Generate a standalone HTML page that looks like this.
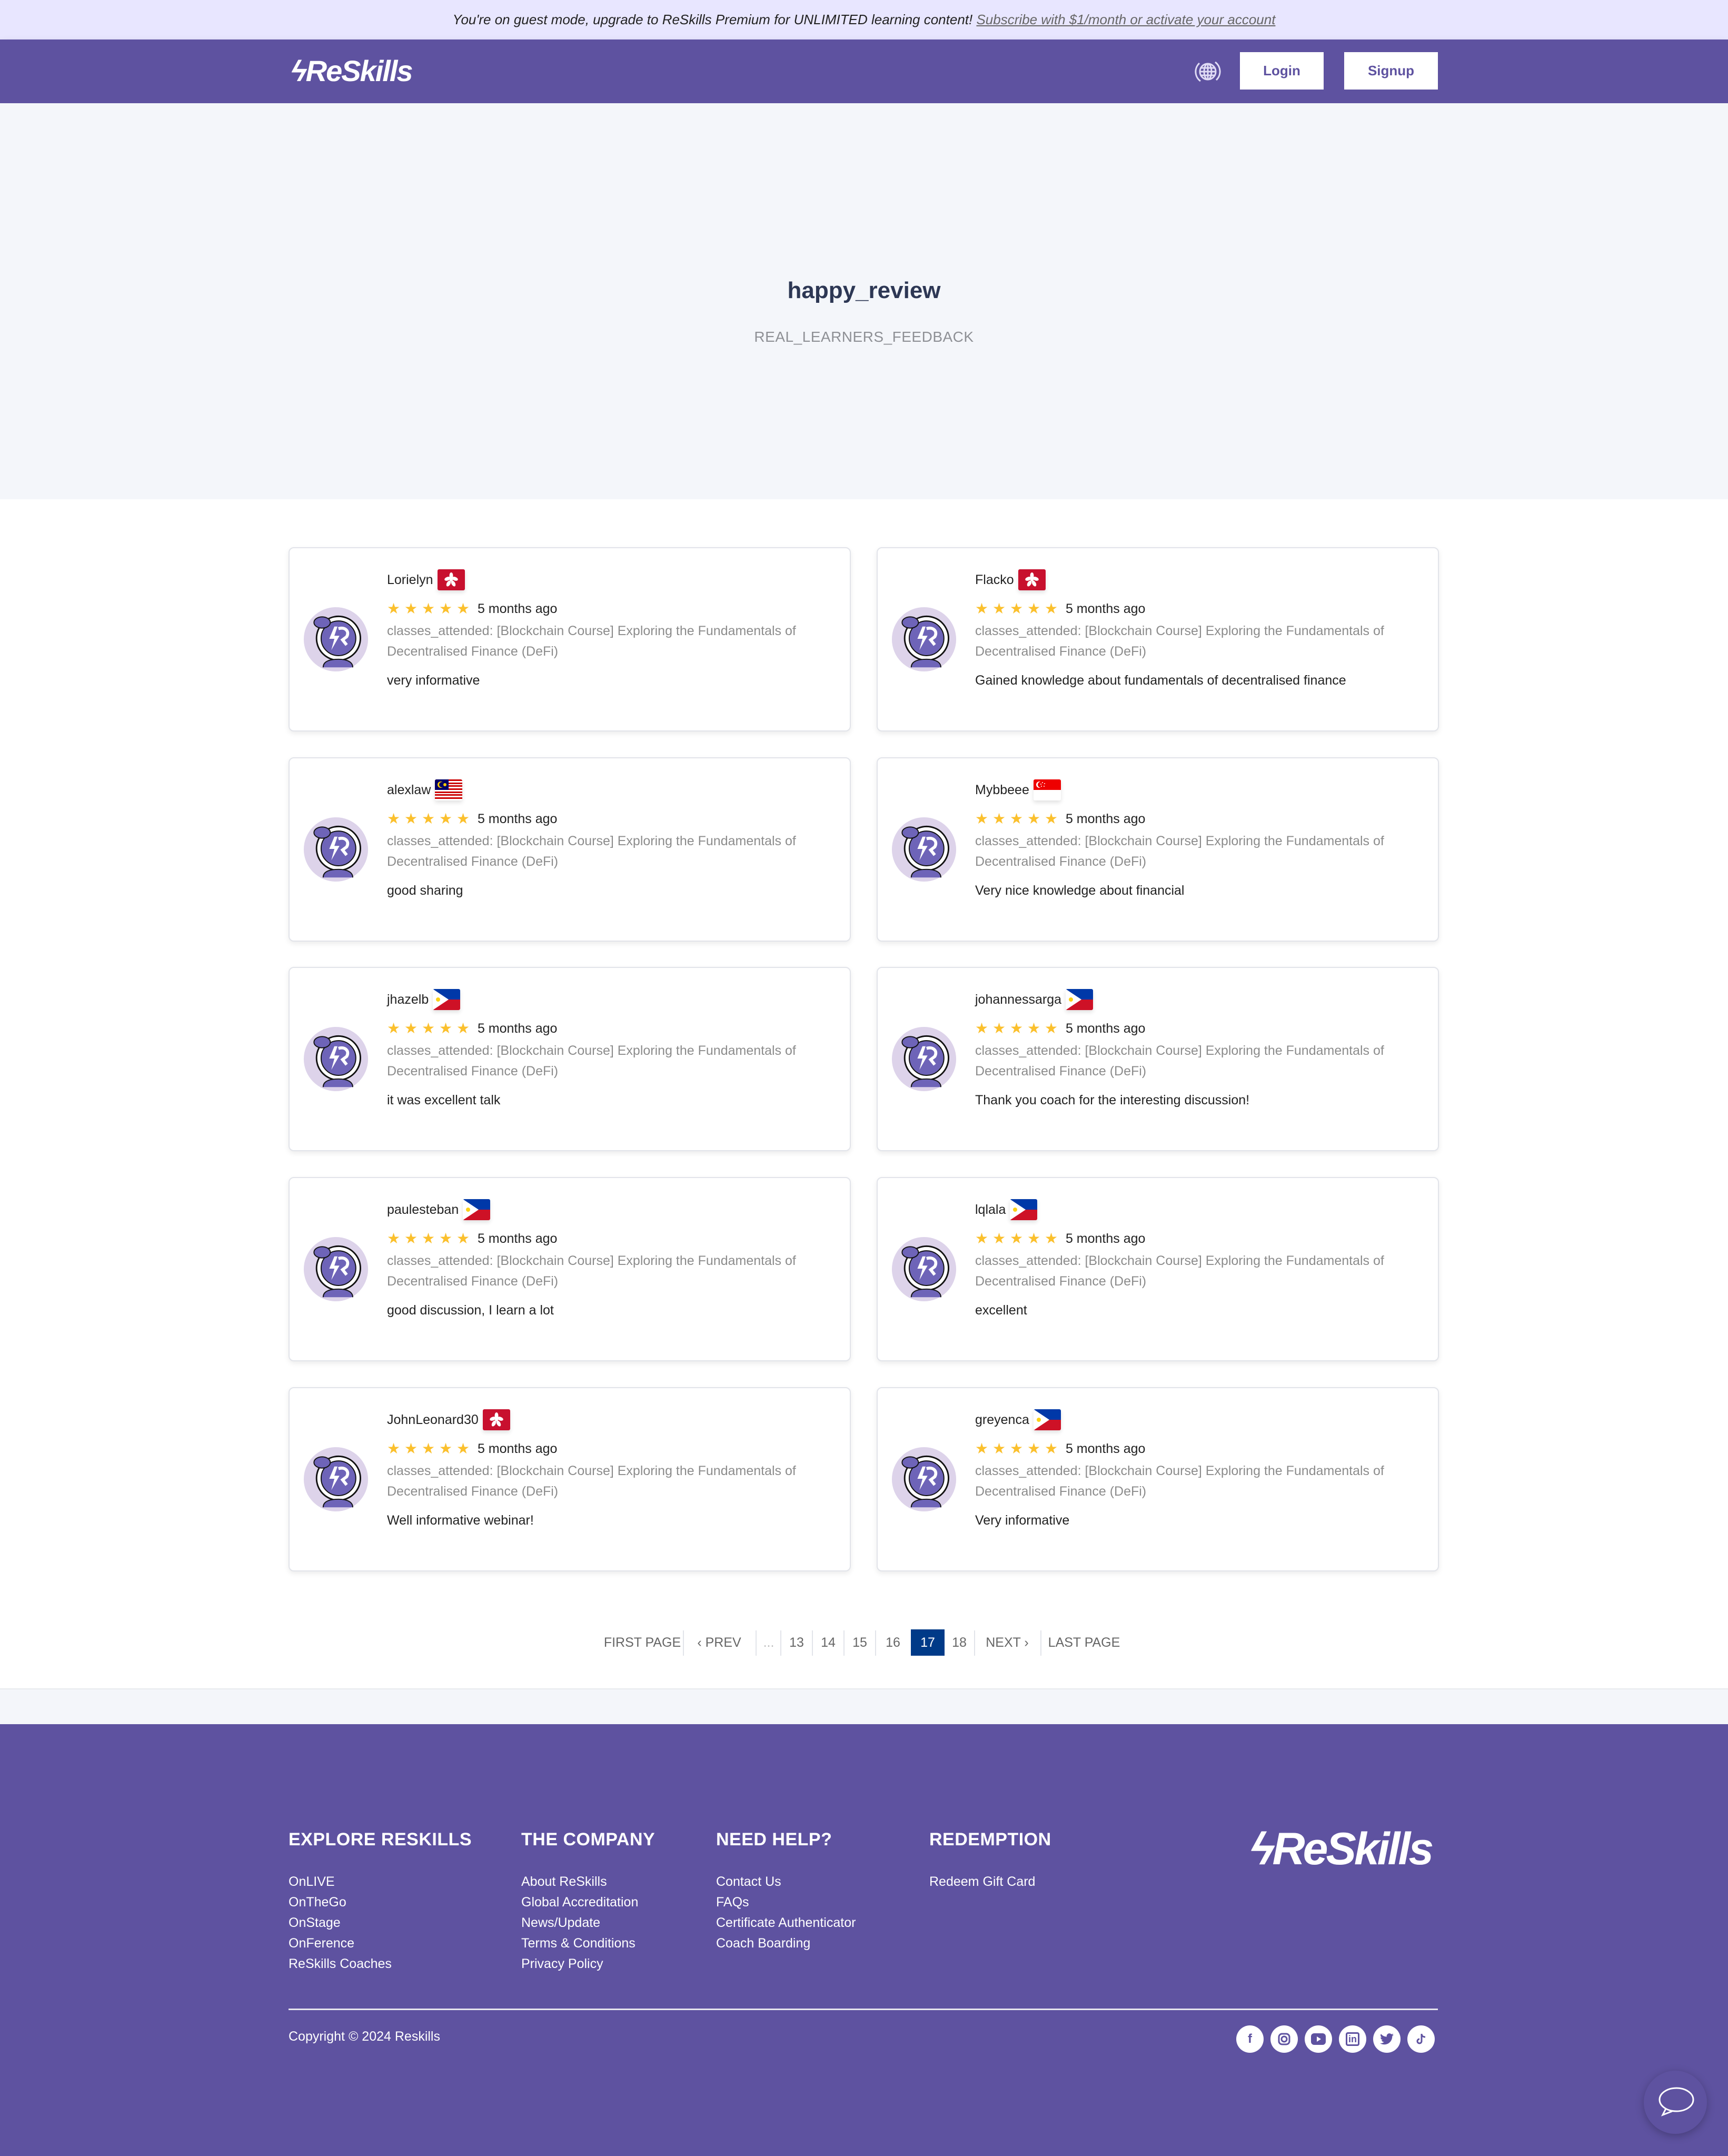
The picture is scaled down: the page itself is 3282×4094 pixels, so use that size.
<!DOCTYPE html>
<html><head><meta charset="utf-8">
<style>
*{margin:0;padding:0;box-sizing:border-box}
body{width:3282px;height:4094px;position:relative;font-family:"Liberation Sans","DejaVu Sans",sans-serif;background:#fff;overflow:hidden}
.a{position:absolute;white-space:nowrap}
.card{position:absolute;width:1068px;height:350px;border:2px solid #e2e4ea;border-radius:10px;background:#fff;box-shadow:0 4px 10px rgba(0,0,0,.08)}
.card .nm{position:absolute;left:185px;top:40px;font-size:25px;color:#222;line-height:32px;display:flex;align-items:center}
.card .nm svg{margin-left:8px;border-radius:3px;box-shadow:0 4px 8px rgba(0,0,0,.12)}
.card .st{position:absolute;left:185px;top:98px;font-size:25px;color:#222;line-height:34px;display:flex;align-items:center}
.card .st span.s{color:#fbc02d;font-size:28px;width:33px;display:inline-block}
.card .cl{position:absolute;left:185px;top:138px;font-size:25px;color:#8c8c8c;line-height:39px;white-space:normal;width:840px}
.card .cm{position:absolute;left:185px;top:234px;font-size:25px;color:#222;line-height:34px}
.card .av{position:absolute;left:25px;top:110px}
.pg{position:absolute;top:3094px;height:50px;line-height:50px;font-size:25px;color:#666;text-align:center;white-space:nowrap}
.sep{position:absolute;top:3096px;width:2px;height:48px;background:#e2e4ea}
.fh{position:absolute;top:3474px;font-size:34px;color:#fff;font-weight:bold;letter-spacing:.5px}
.fl{position:absolute;font-size:25px;color:#fff;line-height:39px}
.soc{position:absolute;top:3846px;width:52px;height:52px;border-radius:50%;background:#fff;display:flex;align-items:center;justify-content:center;color:#5e52a0;font-size:24px;font-weight:bold}
</style></head><body>
<div class="a" style="left:0;top:0;width:3282px;height:75px;background:#e8e6ff"></div>
<div class="a" style="left:0;top:20px;width:3282px;text-align:center;font-size:26px;font-style:italic;color:#222;line-height:34px">You're on guest mode, upgrade to ReSkills Premium for UNLIMITED learning content! <span style="color:#666;text-decoration:underline">Subscribe with $1/month or activate your account</span></div>
<div class="a" style="left:0;top:75px;width:3282px;height:121px;background:#5e52a0;box-shadow:0 6px 14px rgba(0,0,0,.15)"></div>
<div class="a" style="left:553px;top:100px;font-size:56px;font-weight:bold;font-style:italic;color:#fff;letter-spacing:-2px;line-height:70px">&#x03DF;ReSkills</div>
<svg class="a" style="left:2268px;top:110px" width="52" height="52" viewBox="0 0 52 52" fill="none" stroke="#e0dcf5" stroke-width="3"><circle cx="26" cy="26" r="15"/><ellipse cx="26" cy="26" rx="7" ry="15"/><line x1="11" y1="26" x2="41" y2="26"/><line x1="13" y1="19" x2="39" y2="19"/><line x1="13" y1="33" x2="39" y2="33"/><line x1="26" y1="11" x2="26" y2="41"/><path d="M40 8a22 22 0 0 1 2 34M12 44a22 22 0 0 1-2-34"/></svg>
<div class="a" style="left:2355px;top:99px;width:159px;height:71px;background:#fff;color:#5e52a0;font-size:26px;font-weight:bold;text-align:center;line-height:71px">Login</div>
<div class="a" style="left:2553px;top:99px;width:178px;height:71px;background:#fff;color:#5e52a0;font-size:26px;font-weight:bold;text-align:center;line-height:71px">Signup</div>
<div class="a" style="left:0;top:196px;width:3282px;height:752px;background:#f4f6fa"></div>
<div class="a" style="left:0;top:524px;width:3282px;text-align:center;font-size:44px;color:#2d3754;font-weight:bold;line-height:56px">happy_review</div>
<div class="a" style="left:0;top:620px;width:3282px;text-align:center;font-size:28px;color:#8e9095;line-height:40px;letter-spacing:.5px">REAL_LEARNERS_FEEDBACK</div>

<svg width="0" height="0" style="position:absolute"><defs>
<symbol id="av" viewBox="0 0 130 130"><circle cx="65" cy="65" r="63" fill="#ddd3ea"/><circle cx="70" cy="63" r="43" fill="#fff" stroke="#111" stroke-width="3"/><circle cx="70" cy="63" r="34" fill="#6e64b8" stroke="#111" stroke-width="2"/><path d="M62 40l-10 24h10l-6 22 16-28h-10l6-18z" fill="#fff"/><path d="M70 44c14-4 22 6 16 16l-8 6 8 10" stroke="#fff" stroke-width="6" fill="none"/><ellipse cx="38" cy="32" rx="16" ry="11" fill="#6e64b8" stroke="#111" stroke-width="2"/><path d="M40 120c0-12 12-16 30-16s28 6 28 16" fill="#6e64b8" stroke="#111" stroke-width="2"/></symbol>
<symbol id="hk" viewBox="0 0 52 40"><rect width="52" height="40" fill="#c8102e"/><g fill="#fff"><circle cx="26" cy="20" r="3"/><ellipse cx="26" cy="12" rx="3.5" ry="6"/><ellipse cx="33" cy="18" rx="6" ry="3.5" transform="rotate(20 33 18)"/><ellipse cx="30" cy="27" rx="3.5" ry="6" transform="rotate(-30 30 27)"/><ellipse cx="21" cy="27" rx="3.5" ry="6" transform="rotate(30 21 27)"/><ellipse cx="19" cy="18" rx="6" ry="3.5" transform="rotate(-20 19 18)"/></g></symbol>
<symbol id="my" viewBox="0 0 52 40"><rect width="52" height="40" fill="#fff"/><g fill="#cc0001"><rect y="0" width="52" height="3"/><rect y="6" width="52" height="3"/><rect y="11" width="52" height="3"/><rect y="17" width="52" height="3"/><rect y="23" width="52" height="3"/><rect y="28" width="52" height="3"/><rect y="34" width="52" height="3"/></g><rect width="26" height="20" fill="#010066"/><circle cx="11" cy="10" r="6" fill="#fc0"/><circle cx="13" cy="10" r="5" fill="#010066"/><circle cx="19" cy="10" r="3" fill="#fc0"/></symbol>
<symbol id="sg" viewBox="0 0 52 40"><rect width="52" height="40" fill="#fff"/><rect width="52" height="20" fill="#e00"/><circle cx="11" cy="10" r="6" fill="#fff"/><circle cx="13.5" cy="10" r="5.5" fill="#e00"/><g fill="#fff"><circle cx="17" cy="6" r="1"/><circle cx="21" cy="8" r="1"/><circle cx="20" cy="13" r="1"/><circle cx="15" cy="13" r="1"/><circle cx="14" cy="9" r="1"/></g></symbol>
<symbol id="ph" viewBox="0 0 52 40"><rect width="52" height="20" fill="#0038a8"/><rect y="20" width="52" height="20" fill="#ce1126"/><path d="M0 0L30 20L0 40z" fill="#fff"/><circle cx="10" cy="20" r="4" fill="#fcd116"/></symbol>
</defs></svg>

<div class="card" style="left:548px;top:1039px"><svg class="av" width="126" height="126"><use href="#av"/></svg><div class="nm">Lorielyn<svg width="52" height="40"><use href="#hk"/></svg></div><div class="st"><span class="s">★</span><span class="s">★</span><span class="s">★</span><span class="s">★</span><span class="s">★</span>&nbsp;5 months ago</div><div class="cl">classes_attended: [Blockchain Course] Exploring the Fundamentals of Decentralised Finance (DeFi)</div><div class="cm">very informative</div></div>
<div class="card" style="left:1665px;top:1039px"><svg class="av" width="126" height="126"><use href="#av"/></svg><div class="nm">Flacko<svg width="52" height="40"><use href="#hk"/></svg></div><div class="st"><span class="s">★</span><span class="s">★</span><span class="s">★</span><span class="s">★</span><span class="s">★</span>&nbsp;5 months ago</div><div class="cl">classes_attended: [Blockchain Course] Exploring the Fundamentals of Decentralised Finance (DeFi)</div><div class="cm">Gained knowledge about fundamentals of decentralised finance</div></div>

<div class="card" style="left:548px;top:1438px"><svg class="av" width="126" height="126"><use href="#av"/></svg><div class="nm">alexlaw<svg width="52" height="40"><use href="#my"/></svg></div><div class="st"><span class="s">★</span><span class="s">★</span><span class="s">★</span><span class="s">★</span><span class="s">★</span>&nbsp;5 months ago</div><div class="cl">classes_attended: [Blockchain Course] Exploring the Fundamentals of Decentralised Finance (DeFi)</div><div class="cm">good sharing</div></div>
<div class="card" style="left:1665px;top:1438px"><svg class="av" width="126" height="126"><use href="#av"/></svg><div class="nm">Mybbeee<svg width="52" height="40"><use href="#sg"/></svg></div><div class="st"><span class="s">★</span><span class="s">★</span><span class="s">★</span><span class="s">★</span><span class="s">★</span>&nbsp;5 months ago</div><div class="cl">classes_attended: [Blockchain Course] Exploring the Fundamentals of Decentralised Finance (DeFi)</div><div class="cm">Very nice knowledge about financial</div></div>

<div class="card" style="left:548px;top:1836px"><svg class="av" width="126" height="126"><use href="#av"/></svg><div class="nm">jhazelb<svg width="52" height="40"><use href="#ph"/></svg></div><div class="st"><span class="s">★</span><span class="s">★</span><span class="s">★</span><span class="s">★</span><span class="s">★</span>&nbsp;5 months ago</div><div class="cl">classes_attended: [Blockchain Course] Exploring the Fundamentals of Decentralised Finance (DeFi)</div><div class="cm">it was excellent talk</div></div>
<div class="card" style="left:1665px;top:1836px"><svg class="av" width="126" height="126"><use href="#av"/></svg><div class="nm">johannessarga<svg width="52" height="40"><use href="#ph"/></svg></div><div class="st"><span class="s">★</span><span class="s">★</span><span class="s">★</span><span class="s">★</span><span class="s">★</span>&nbsp;5 months ago</div><div class="cl">classes_attended: [Blockchain Course] Exploring the Fundamentals of Decentralised Finance (DeFi)</div><div class="cm">Thank you coach for the interesting discussion!</div></div>

<div class="card" style="left:548px;top:2235px"><svg class="av" width="126" height="126"><use href="#av"/></svg><div class="nm">paulesteban<svg width="52" height="40"><use href="#ph"/></svg></div><div class="st"><span class="s">★</span><span class="s">★</span><span class="s">★</span><span class="s">★</span><span class="s">★</span>&nbsp;5 months ago</div><div class="cl">classes_attended: [Blockchain Course] Exploring the Fundamentals of Decentralised Finance (DeFi)</div><div class="cm">good discussion, I learn a lot</div></div>
<div class="card" style="left:1665px;top:2235px"><svg class="av" width="126" height="126"><use href="#av"/></svg><div class="nm">lqlala<svg width="52" height="40"><use href="#ph"/></svg></div><div class="st"><span class="s">★</span><span class="s">★</span><span class="s">★</span><span class="s">★</span><span class="s">★</span>&nbsp;5 months ago</div><div class="cl">classes_attended: [Blockchain Course] Exploring the Fundamentals of Decentralised Finance (DeFi)</div><div class="cm">excellent</div></div>

<div class="card" style="left:548px;top:2634px"><svg class="av" width="126" height="126"><use href="#av"/></svg><div class="nm">JohnLeonard30<svg width="52" height="40"><use href="#hk"/></svg></div><div class="st"><span class="s">★</span><span class="s">★</span><span class="s">★</span><span class="s">★</span><span class="s">★</span>&nbsp;5 months ago</div><div class="cl">classes_attended: [Blockchain Course] Exploring the Fundamentals of Decentralised Finance (DeFi)</div><div class="cm">Well informative webinar!</div></div>
<div class="card" style="left:1665px;top:2634px"><svg class="av" width="126" height="126"><use href="#av"/></svg><div class="nm">greyenca<svg width="52" height="40"><use href="#ph"/></svg></div><div class="st"><span class="s">★</span><span class="s">★</span><span class="s">★</span><span class="s">★</span><span class="s">★</span>&nbsp;5 months ago</div><div class="cl">classes_attended: [Blockchain Course] Exploring the Fundamentals of Decentralised Finance (DeFi)</div><div class="cm">Very informative</div></div>

<div class="pg" style="left:1146px;width:148px">FIRST PAGE</div>
<div class="sep" style="left:1297px"></div>
<div class="pg" style="left:1310px;width:112px">&#8249; PREV</div>
<div class="sep" style="left:1435px"></div>
<div class="pg" style="left:1440px;width:40px;color:#bbb">...</div>
<div class="sep" style="left:1482px"></div>
<div class="pg" style="left:1484px;width:58px">13</div>
<div class="sep" style="left:1542px"></div>
<div class="pg" style="left:1544px;width:58px">14</div>
<div class="sep" style="left:1602px"></div>
<div class="pg" style="left:1604px;width:58px">15</div>
<div class="sep" style="left:1662px"></div>
<div class="pg" style="left:1664px;width:64px">16</div>
<div class="pg" style="left:1730px;width:64px;background:#003a88;color:#fff">17</div>
<div class="pg" style="left:1794px;width:56px">18</div>
<div class="sep" style="left:1850px"></div>
<div class="pg" style="left:1852px;width:122px">NEXT &#8250;</div>
<div class="sep" style="left:1976px"></div>
<div class="pg" style="left:1984px;width:150px">LAST PAGE</div>

<div class="a" style="left:0;top:3206px;width:3282px;height:68px;background:#f4f6fa;border-top:2px solid #e8eaee"></div>
<div class="a" style="left:0;top:3274px;width:3282px;height:820px;background:#5e52a0"></div>
<div class="fh" style="left:548px">EXPLORE RESKILLS</div>
<div class="fh" style="left:990px">THE COMPANY</div>
<div class="fh" style="left:1360px">NEED HELP?</div>
<div class="fh" style="left:1765px">REDEMPTION</div>
<div class="fl" style="left:548px;top:3554px">OnLIVE<br>OnTheGo<br>OnStage<br>OnFerence<br>ReSkills Coaches</div>
<div class="fl" style="left:990px;top:3554px">About ReSkills<br>Global Accreditation<br>News/Update<br>Terms &amp; Conditions<br>Privacy Policy</div>
<div class="fl" style="left:1360px;top:3554px">Contact Us<br>FAQs<br>Certificate Authenticator<br>Coach Boarding</div>
<div class="fl" style="left:1765px;top:3554px">Redeem Gift Card</div>
<div class="a" style="left:2375px;top:3456px;font-size:86px;font-weight:bold;font-style:italic;color:#fff;letter-spacing:-4px;line-height:110px">&#x03DF;ReSkills</div>
<div class="a" style="left:548px;top:3814px;width:2183px;height:3px;background:#e6e4ee"></div>
<div class="fl" style="left:548px;top:3848px">Copyright © 2024 Reskills</div>
<div class="soc" style="left:2348px">f</div>
<div class="soc" style="left:2413px"><svg width="26" height="26" viewBox="0 0 26 26" fill="none" stroke="#5e52a0" stroke-width="3"><rect x="3" y="3" width="20" height="20" rx="6"/><circle cx="13" cy="13" r="5"/></svg></div>
<div class="soc" style="left:2478px"><svg width="28" height="22" viewBox="0 0 28 22"><rect width="28" height="22" rx="6" fill="#5e52a0"/><path d="M11 6l8 5-8 5z" fill="#fff"/></svg></div>
<div class="soc" style="left:2543px;font-size:18px"><span style="border:3px solid #5e52a0;border-radius:4px;padding:0 2px;line-height:20px">in</span></div>
<div class="soc" style="left:2608px"><svg width="26" height="22" viewBox="0 0 24 20"><path d="M24 2.4a10 10 0 0 1-2.8.8A5 5 0 0 0 23.3.4a10 10 0 0 1-3.1 1.2A4.9 4.9 0 0 0 11.8 6 14 14 0 0 1 1.7.9a4.9 4.9 0 0 0 1.5 6.6A5 5 0 0 1 1 6.9a4.9 4.9 0 0 0 3.9 4.8 5 5 0 0 1-2.2.1 4.9 4.9 0 0 0 4.6 3.4A9.9 9.9 0 0 1 0 17.3 14 14 0 0 0 7.5 19.5c9 0 14-7.5 14-14v-.6A10 10 0 0 0 24 2.4z" fill="#5e52a0"/></svg></div>
<div class="soc" style="left:2673px"><svg width="22" height="24" viewBox="0 0 22 24" fill="none" stroke="#5e52a0" stroke-width="3"><path d="M12 2v14a4 4 0 1 1-4-4M12 2c0 4 3 6 7 6"/></svg></div>
<div class="a" style="left:3122px;top:3932px;width:120px;height:120px;border-radius:50%;background:#5e52a0;box-shadow:0 4px 16px rgba(0,0,0,.25)"></div>
<svg class="a" style="left:3146px;top:3960px" width="72" height="64" viewBox="0 0 72 64" fill="none" stroke="#fff" stroke-width="3"><ellipse cx="38" cy="27" rx="32" ry="22"/><path d="M18 44l-6 12 18-7"/></svg>
</body></html>
